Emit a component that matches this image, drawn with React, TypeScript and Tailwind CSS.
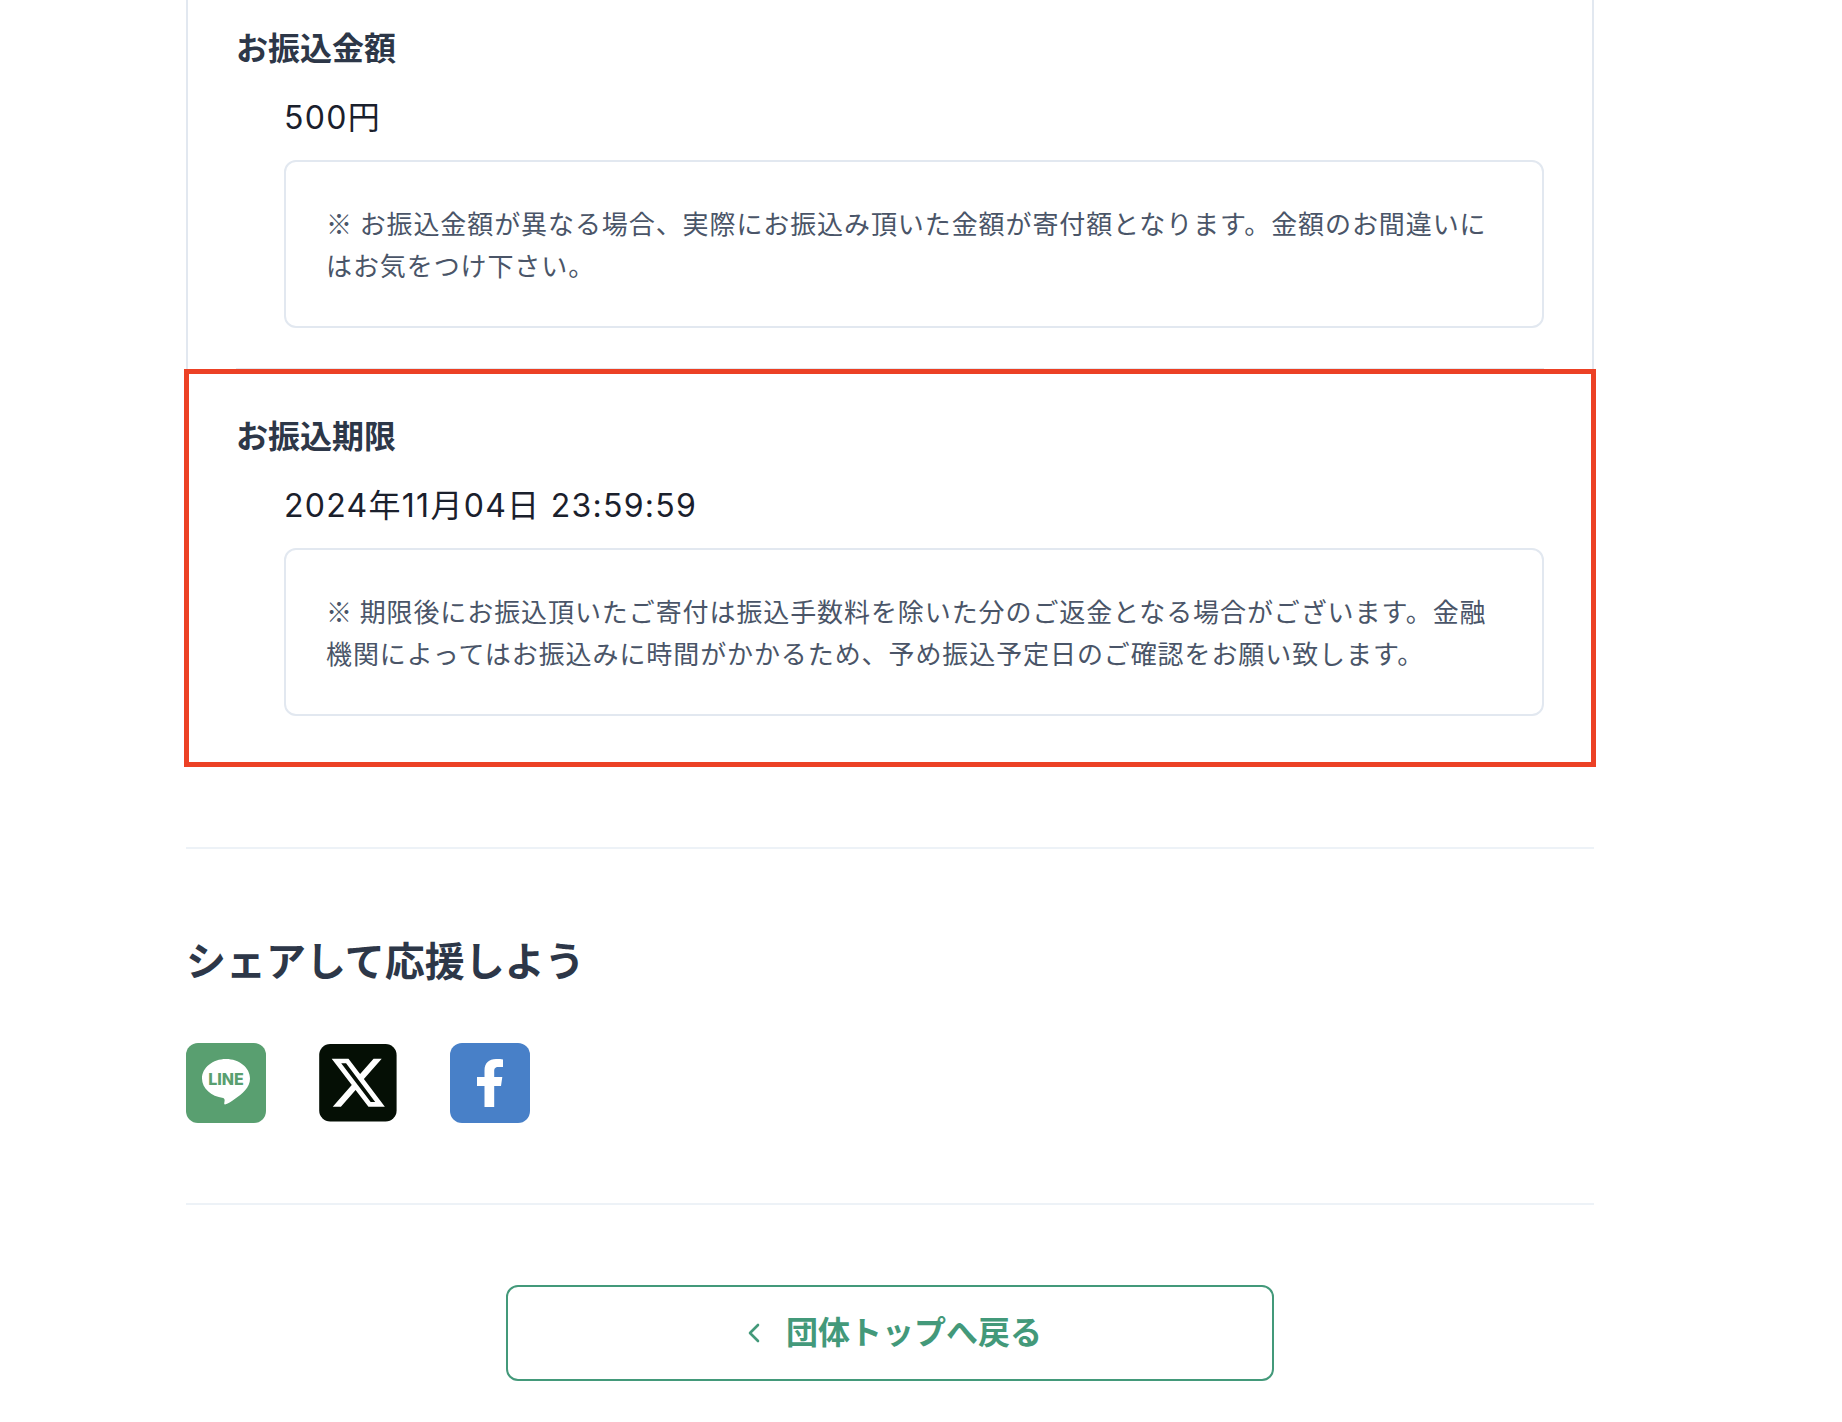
import type { ReactNode } from 'react';

interface PaymentRowProps {
  title: string;
  value: string;
  note: string;
}

function PaymentRow({ title, value, note }: PaymentRowProps) {
  return (
    <section className="mx-12 border-t-2 border-[#e2e8f0] py-10">
      <h3 className="text-[32px] leading-[54px] font-semibold text-[#2d3748]">{title}</h3>
      <div className="mt-[14px] pl-12">
        <p className="text-[32px] leading-[56px] tracking-[0.04em] text-[#1a202c]">{value}</p>
        <p className="mt-[14px] rounded-xl border-2 border-[#e2e8f0] p-10 font-['Noto_Sans_CJK_JP',sans-serif] text-[26px] leading-[42px] tracking-[0.035em] text-[#4a5568]">
          {note}
        </p>
      </div>
    </section>
  );
}

interface ShareLinkProps {
  label: string;
  children: ReactNode;
}

function ShareLink({ label, children }: ShareLinkProps) {
  return (
    <a href="#" aria-label={label} className="block size-20">
      <svg viewBox="0 0 80 80" className="size-20" aria-hidden="true">
        {children}
      </svg>
    </a>
  );
}

export default function App() {
  return (
    <main className="bg-white pr-[62px] font-[Inter,'Noto_Sans_CJK_JP',sans-serif]">
      <div className="mx-auto max-w-[1408px]">
        <div className="relative -mt-5 border-x-2 border-b-2 border-[#e2e8f0] pb-[9px]">
          <PaymentRow
            title="お振込金額"
            value="500円"
            note="※ お振込金額が異なる場合、実際にお振込み頂いた金額が寄付額となります。金額のお間違いにはお気をつけ下さい。"
          />
          <PaymentRow
            title="お振込期限"
            value="2024年11月04日 23:59:59"
            note="※ 期限後にお振込頂いたご寄付は振込手数料を除いた分のご返金となる場合がございます。金融機関によってはお振込みに時間がかかるため、予め振込予定日のご確認をお願い致します。"
          />
          {/* Highlight around the deadline */}
          <div className="pointer-events-none absolute -inset-x-1 -bottom-0.5 h-[398px] border-5 border-[#ec4125]" />
        </div>

        <section className="mt-20 border-y-2 border-[#edf2f7] py-20">
          <h2 className="text-[40px] leading-[66px] font-bold text-[#2d3748]">シェアして応援しよう</h2>
          <div className="mt-12 flex gap-[52px]">
            <ShareLink label="LINEでシェア">
              <rect width="80" height="80" rx="12" fill="#599f70" />
              <path
                d="M40 16c13.200 0 24 8.700 24 19.400 0 4.300-1.700 8.200-5.100 12-5 5.700-16 12.600-18.500 13.700-2.600 1.100-2.200-.7-2.100-1.300l.3-2.100c.1-1-.1-2.400-1.400-2.800C25.100 53.300 16 45.200 16 35.400 16 24.700 26.800 16 40 16z"
                fill="#fff"
              />
              <text x="40" y="42" textAnchor="middle" className="fill-[#599f70] text-[16px] font-extrabold">
                LINE
              </text>
            </ShareLink>
            <ShareLink label="Xでシェア">
              <rect x="1.200" y="1" width="77.400" height="77.400" rx="11" fill="#050f05" />
              <path
                transform="translate(10.600 10.200) scale(.1155)"
                d="M389.200 48h70.600L305.600 224.200 487 464H345L233.700 318.600 106.500 464H35.800l164.900-188.500L26.800 48h145.600l100.500 132.900L389.200 48zm-24.800 373.800h39.100L151.100 88h-42l255.300 333.800z"
                fill="#fff"
              />
            </ShareLink>
            <ShareLink label="Facebookでシェア">
              <rect width="80" height="80" rx="12" fill="#4880c8" />
              <path
                d="M34.500 64V43H27v-9h7.500v-6.500C34.500 20 39 16 46 16c3 0 5.500.2 7 .4V24h-4.500c-3.500 0-4.300 1.800-4.300 4.400V34h8.100L51 43h-6.800v21z"
                fill="#fff"
              />
            </ShareLink>
          </div>
        </section>

        <div className="flex justify-center py-20">
          <a
            href="#"
            className="flex h-24 w-full max-w-[768px] items-center justify-center gap-6 rounded-xl border-2 border-[#43997a] text-[32px] font-semibold text-[#43997a]"
          >
            <svg viewBox="0 0 24 24" className="size-6" fill="none" stroke="currentColor" strokeWidth="2.600" aria-hidden="true">
              <path d="M20 4l-8 8 8 8" strokeLinecap="round" strokeLinejoin="round" />
            </svg>
            団体トップへ戻る
          </a>
        </div>
      </div>
    </main>
  );
}
